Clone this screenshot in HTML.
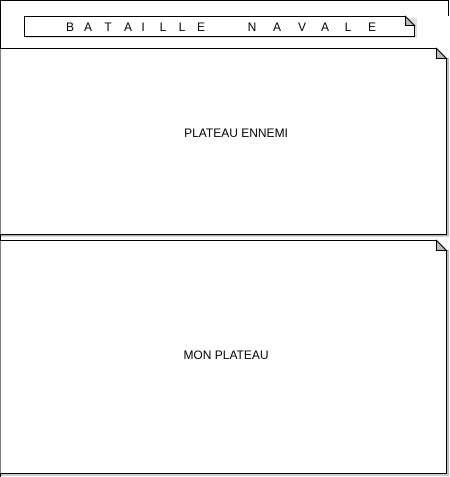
<!DOCTYPE html>
<html><head><style>html,body{margin:0;padding:0;background:#fff;width:450px;height:477px;overflow:hidden}</style></head>
<body>
<svg width="450" height="477" xmlns="http://www.w3.org/2000/svg" font-family="Liberation Sans, DejaVu Sans, sans-serif">
<defs><linearGradient id="sh" x1="0" y1="0" x2="0" y2="1"><stop offset="0" stop-color="#999"/><stop offset="1" stop-color="#eee"/></linearGradient></defs>
<path d="M0.5 477 V0.5 H448.5 V16" fill="none" stroke="#000"/>
<rect x="26" y="18" width="391" height="20" fill="#ccc" opacity="0.6"/>
<path d="M24.5 16.5 H405.5 L414.5 25.5 V36.5 H24.5 Z" fill="#fff" stroke="#000"/>
<path d="M405.5 16.5 V25.5 H414.5 Z" fill="#bbb" stroke="#000"/>
<g font-size="12" text-anchor="middle">
<text x="70" y="31">B</text><text x="88" y="31">A</text><text x="108" y="31">T</text><text x="128" y="31">A</text><text x="143" y="31">I</text><text x="163" y="31">L</text><text x="182" y="31">L</text><text x="201" y="31">E</text>
<text x="252" y="31">N</text><text x="277" y="31">A</text><text x="302" y="31">V</text><text x="325" y="31">A</text><text x="348" y="31">L</text><text x="372" y="31">E</text>
</g>
<rect x="1" y="235" width="448" height="2" fill="url(#sh)"/>
<rect x="447" y="58" width="2" height="178" fill="#bbb"/>
<path d="M0.5 48.5 H436.5 L446.5 58.5 V234.5 H0.5" fill="#fff" stroke="#000"/>
<path d="M436.5 48.5 V58.5 H446.5 Z" fill="#bbb" stroke="#000"/>
<text x="236" y="137" font-size="12" text-anchor="middle">PLATEAU ENNEMI</text>
<rect x="1" y="474" width="448" height="2" fill="#ccc"/>
<rect x="447" y="250" width="2" height="226" fill="#bbb"/>
<path d="M0.5 240.5 H436.5 L446.5 250.5 V473.5 H0.5" fill="#fff" stroke="#000"/>
<path d="M436.5 240.5 V250.5 H446.5 Z" fill="#bbb" stroke="#000"/>
<text x="226" y="359" font-size="12" text-anchor="middle">MON PLATEAU</text>
</svg>
</body></html>
